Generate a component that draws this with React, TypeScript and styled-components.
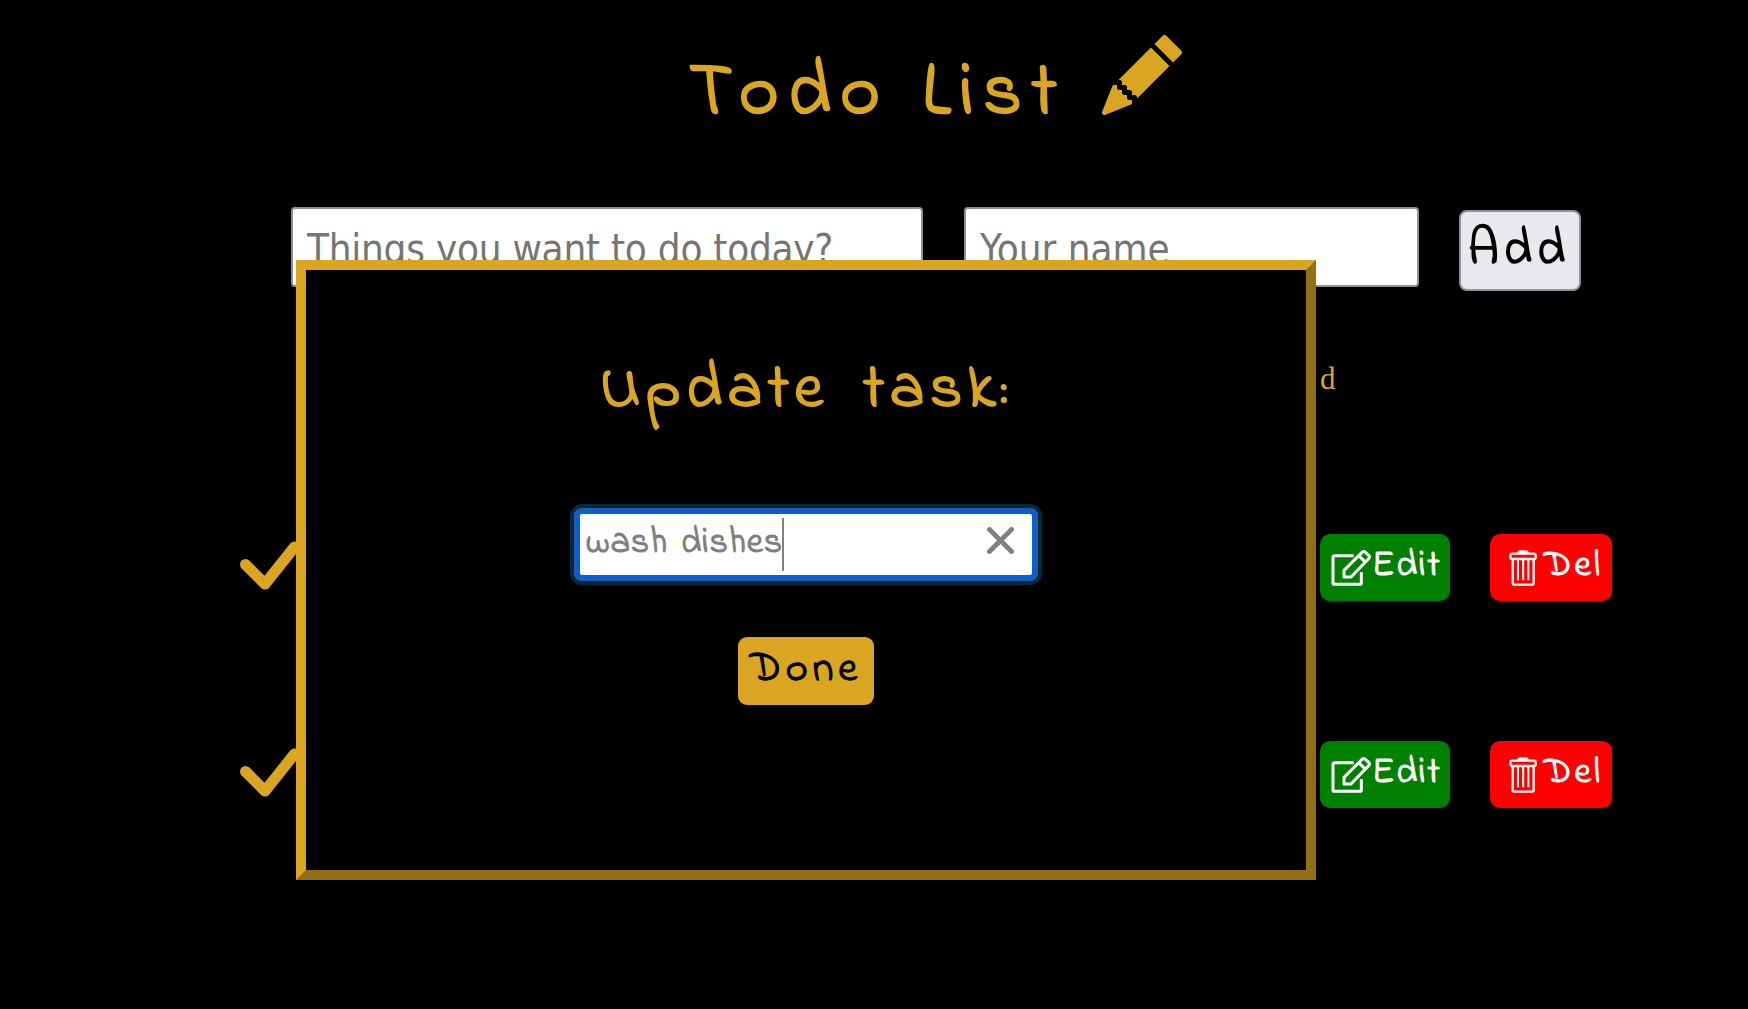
import React from "react";
import styled, { createGlobalStyle } from "styled-components";
import { BsPencilFill } from "react-icons/bs";

const gold = "#daa520";
const hand = `"Indie Flower", Lato, "Open Sans", sans-serif`;

const GlobalStyle = createGlobalStyle`
  * { box-sizing: border-box; }
  body { margin: 0; background: #000; color: ${gold}; overflow: hidden; }
`;

const Page = styled.main`
  width: 1748px;
  height: 1009px;
  display: flex;
  flex-direction: column;
  background: #000;
`;

const Lettering = styled.span<{ $size: number; $track?: number; $gap?: number }>`
  font-family: ${hand};
  font-weight: 700;
  font-size: ${(p) => p.$size}px;
  letter-spacing: ${(p) => p.$track ?? 0}px;
  word-spacing: ${(p) => p.$gap ?? 0}px;
  line-height: 1;
  white-space: nowrap;
`;

const Header = styled.header`
  height: 207px;
  padding: 35px 0 0 689px;
  display: flex;
  align-items: flex-start;
`;

const Title = styled.h1`
  width: 413px;
  margin: 0;
  padding-top: 22px;
  line-height: 0;
  font-weight: 400;
`;

const Form = styled.form`
  height: 84px;
  padding-left: 291px;
  display: flex;
  align-items: flex-start;
  gap: 41px;
`;

const Field = styled.input<{ $width: number; $track?: number }>`
  width: ${(p) => p.$width}px;
  height: 80px;
  padding: 3px 14px 0;
  border: 2px solid #8f8f9d;
  border-radius: 4px;
  background: #fff;
  font-family: "DejaVu Sans Condensed", "DejaVu Sans", sans-serif;
  font-stretch: condensed;
  font-size: 40px;
  letter-spacing: ${(p) => p.$track ?? 0}px;
  &::placeholder { color: #757575; opacity: 1; }
`;

const AddButton = styled.button`
  width: 122px;
  height: 81px;
  margin-top: 3px;
  margin-left: -1px;
  padding: 14px 0 0 7px;
  display: flex;
  border: 2px solid #8f8f9d;
  border-radius: 8px;
  background: #e9e9ed;
  color: #000;
`;

const Note = styled.p`
  height: 243px;
  margin: 0;
  padding: 70px 0 0 1320px;
  font: 31px/36px "Liberation Serif", serif;
`;

const Row = styled.section`
  height: 207px;
  flex: none;
  padding: 0 136px 0 240px;
  display: flex;
  align-items: flex-start;
  gap: 40px;
`;

const Check = styled.svg`
  margin: 7px auto 0 0;
  flex: none;
`;

const Action = styled.button<{ $width: number; $color: string; $inset: number; $space: number }>`
  width: ${(p) => p.$width}px;
  height: 67px;
  padding: 14px 0 0 ${(p) => p.$inset}px;
  display: flex;
  align-items: flex-start;
  gap: ${(p) => p.$space}px;
  border: 0;
  border-radius: 10px;
  background: ${(p) => p.$color};
  color: #fff;
`;

const ActionIcon = styled.svg`
  flex: none;
  margin-top: 2px;
  fill: none;
  stroke: currentColor;
  stroke-linejoin: round;
`;

const Modal = styled.div`
  position: absolute;
  left: 296px;
  top: 260px;
  width: 1020px;
  height: 620px;
  display: flex;
  flex-direction: column;
  align-items: center;
  border: 10px solid;
  border-color: ${gold} #926e15 #926e15 ${gold};
  background: #000;
`;

const ModalTitle = styled.h2`
  width: 412px;
  height: 149px;
  margin: 89px 0 0;
  line-height: 0;
  font-weight: 400;
`;

const TaskBox = styled.div`
  width: 464px;
  height: 73px;
  flex: none;
  padding: 4px 18px 0 6px;
  display: flex;
  border: 6px solid #0060df;
  border-radius: 8px;
  box-shadow: 0 0 0 4px #022a45;
  outline: 2px solid #35588c;
  outline-offset: -2px;
  background: #fff;
  color: #808080;
`;

const TaskText = styled.div`
  padding-top: 8px;
  width: 196px;
`;

const Caret = styled.i`
  width: 2px;
  height: 53px;
  background: #808080;
`;

const Clear = styled.svg`
  margin: 9px 0 0 auto;
`;

const Done = styled.button`
  width: 136px;
  height: 68px;
  margin-top: 56px;
  padding: 12px 0 0 12px;
  display: flex;
  border: 0;
  border-radius: 9px;
  background: ${gold};
  color: #000;
`;

function EditIcon() {
  return (
    <ActionIcon width="41" height="37" viewBox="0 4 123 111" strokeWidth="9">
      <path d="M68 21H11Q6 21 6 26V102Q6 107 11 107H86Q91 107 91 102V71" />
      <path d="M39 85V65L93 11Q98 6 103 11L113 20Q118 25 113 30L60 85Z" />
      <path d="M83 21 104 41" />
    </ActionIcon>
  );
}

function BinIcon() {
  return (
    <ActionIcon width="28" height="36" viewBox="0 0 84 108" strokeWidth="7">
      <path d="M25 9Q25 1 34 1H50Q59 1 59 9Z" fill="currentColor" stroke="none" />
      <rect x="4" y="11" width="76" height="16" rx="5" />
      <path d="M11 28V100Q11 104 16 104H69Q74 104 74 100V28" />
      <path d="M27 28V91M42.5 28V91M58 28V91" strokeWidth="6" />
    </ActionIcon>
  );
}

function TaskRow() {
  return (
    <Row>
      <Check width="61" height="50" viewBox="0 0 61 50" fill="none" stroke={gold} strokeWidth="11" strokeLinecap="round" strokeLinejoin="round">
        <path d="M5.5 23.5 25 43 54.5 6" />
      </Check>
      <Action $width={130} $color="#008000" $inset={11} $space={-2}>
        <EditIcon />
        <Lettering $size={37} $track={1.8}>Edit</Lettering>
      </Action>
      <Action $width={122} $color="#ff0000" $inset={19} $space={7}>
        <BinIcon />
        <Lettering $size={37} $track={3}>Del</Lettering>
      </Action>
    </Row>
  );
}

export default function App() {
  return (
    <Page>
      <GlobalStyle />
      <Header>
        <Title><Lettering $size={76} $track={9.5} $gap={4.5}>Todo List</Lettering></Title>
        <BsPencilFill size={80} color={gold} />
      </Header>
      <Form>
        <Field $width={632} $track={-0.25} placeholder="Things you want to do today?" />
        <Field $width={455} placeholder="Your name" />
        <AddButton type="button"><Lettering $size={50} $track={5}>Add</Lettering></AddButton>
      </Form>
      <Note>d</Note>
      <TaskRow />
      <TaskRow />
      <Modal>
        <ModalTitle><Lettering $size={64} $track={5.4} $gap={13}>Update task:</Lettering></ModalTitle>
        <TaskBox>
          <TaskText><Lettering $size={36} $track={0.9} $gap={3}>wash dishes</Lettering></TaskText>
          <Caret />
          <Clear width="27" height="27" viewBox="0 0 27 27" stroke="#808080" strokeWidth="4.8" strokeLinecap="round">
            <path d="M2.5 2.5 24.5 24.5M24.5 2.5 2.5 24.5" />
          </Clear>
        </TaskBox>
        <Done type="button"><Lettering $size={42} $track={5}>Done</Lettering></Done>
      </Modal>
    </Page>
  );
}
